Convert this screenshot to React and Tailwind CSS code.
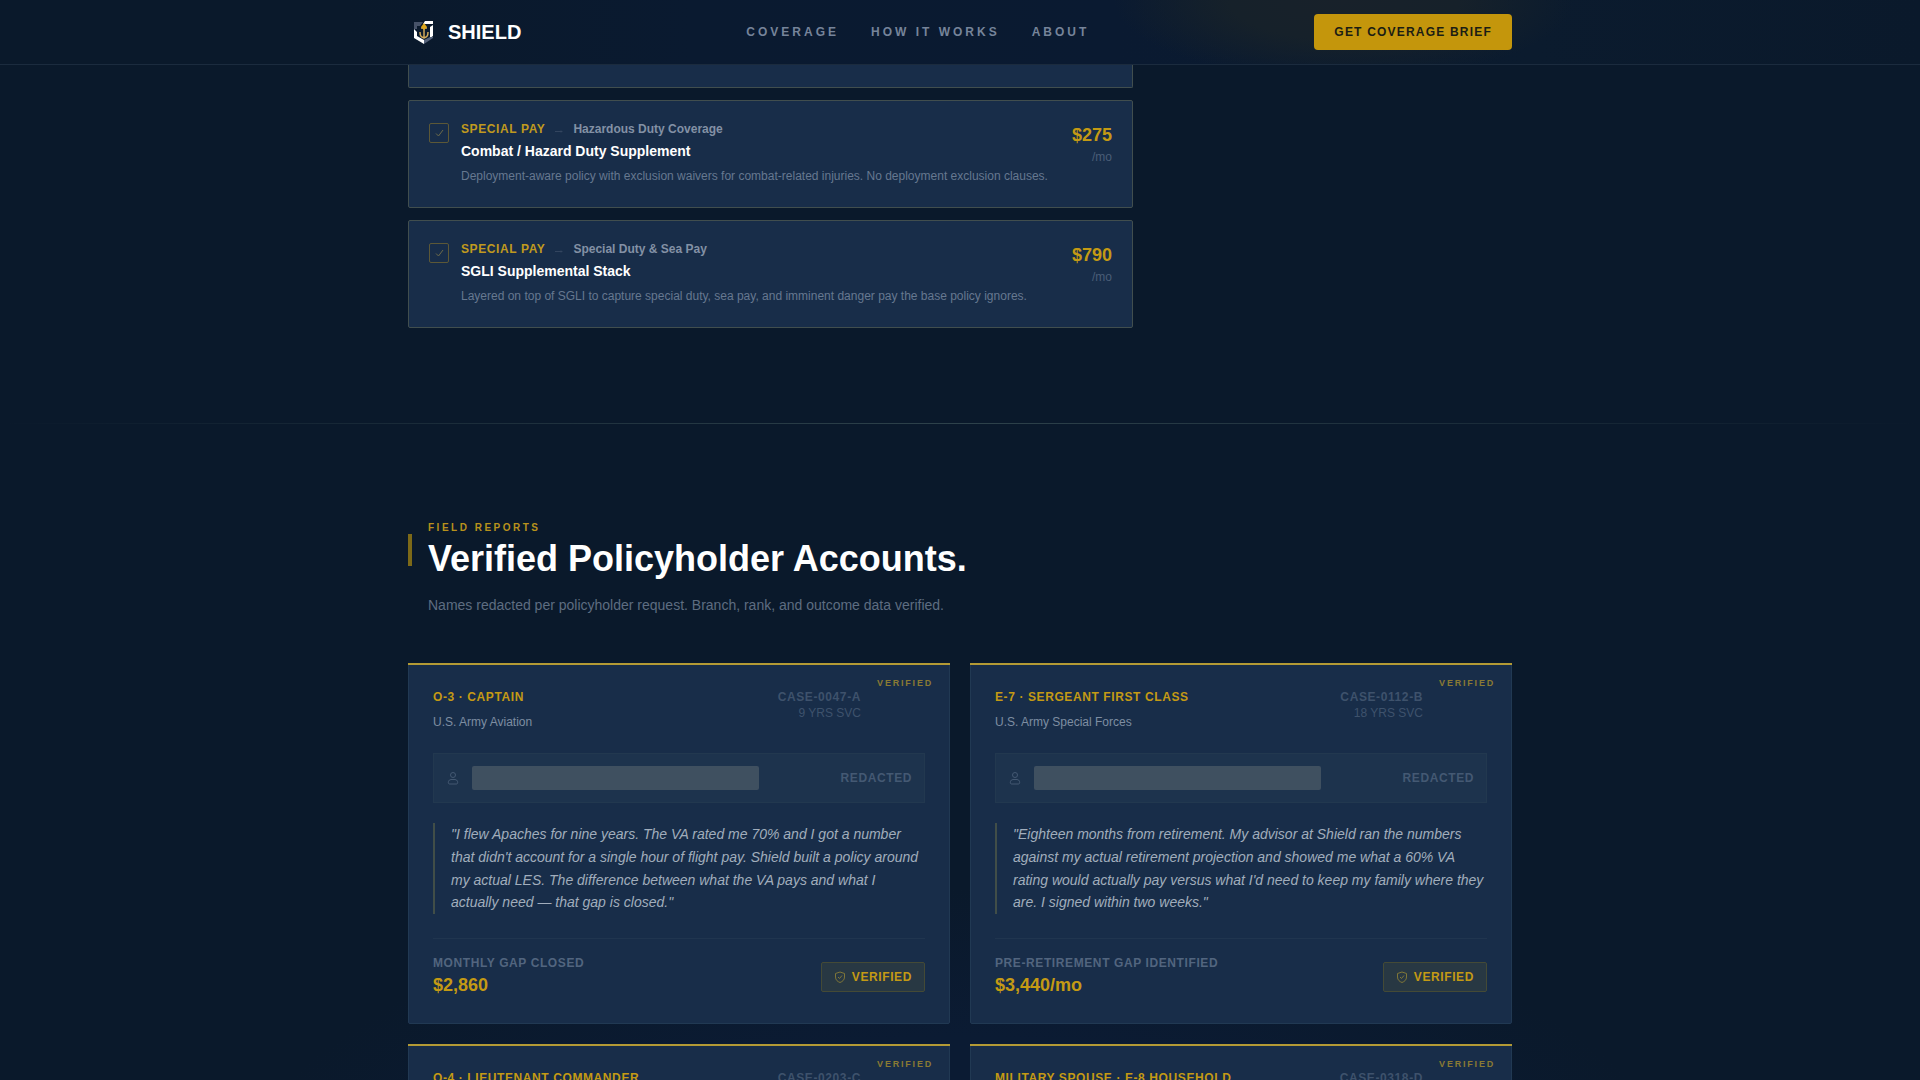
import { useState } from "react"

const plans = [
    {
        id: 'combat', category: 'Hazardous Duty Coverage', title: 'Combat / Hazard Duty Supplement', price: '$275',
        text: 'Deployment-aware policy with exclusion waivers for combat-related injuries. No deployment exclusion clauses.',
    },
    {
        id: 'sgli', category: 'Special Duty & Sea Pay', title: 'SGLI Supplemental Stack', price: '$790',
        text: 'Layered on top of SGLI to capture special duty, sea pay, and imminent danger pay the base policy ignores.',
    },
]

const reports = [
    {
        caseId: 'CASE-0047-A', years: '9 YRS SVC', rank: 'O-3 · CAPTAIN', branch: 'U.S. Army Aviation',
        quote: `"I flew Apaches for nine years. The VA rated me 70% and I got a number that didn't account for a single hour of flight pay. Shield built a policy around my actual LES. The difference between what the VA pays and what I actually need — that gap is closed."`,
        label: 'MONTHLY GAP CLOSED', value: '$2,860',
    },
    {
        caseId: 'CASE-0112-B', years: '18 YRS SVC', rank: 'E-7 · SERGEANT FIRST CLASS', branch: 'U.S. Army Special Forces',
        quote: `"Eighteen months from retirement. My advisor at Shield ran the numbers against my actual retirement projection and showed me what a 60% VA rating would actually pay versus what I'd need to keep my family where they are. I signed within two weeks."`,
        label: 'PRE-RETIREMENT GAP IDENTIFIED', value: '$3,440/mo',
    },
    { caseId: 'CASE-0203-C', rank: 'O-4 · LIEUTENANT COMMANDER' },
    { caseId: 'CASE-0318-D', rank: 'MILITARY SPOUSE · E-8 HOUSEHOLD' },
]

const Logo = () => (
    <svg viewBox="0 0 32 32" className="w-8 h-8" aria-hidden="true">
        <path d="M6 6 H15 L12 10 H9 V13 H6 Z" fill="#465268" />
        <path d="M17 5 H25 V8 H15 Z" fill="#ffffff" />
        <path d="M22 11 L25 9 V20 L22 22 Z" fill="#ffffff" />
        <path d="M6 13 L9 16 V20 L16 24 V28 L6 22 Z" fill="#ffffff" />
        <path d="M25 21 V22 L16 28 V24 L22 21 Z" fill="#55627a" />
        <path d="M16 9 V22 M13 12 H19 M12 16 C12 20 13 21 16 22 C19 21 20 20 20 16" fill="none" stroke="#cfa85a" strokeWidth="1.500" />
        <path d="M16 7 L19 11 L16 14 L13 11 Z" fill="#dca61c" />
    </svg>
)

const Navbar = () => (
    <header className="fixed inset-x-0 top-0 z-10 bg-[#0a192b] bg-[radial-gradient(ellipse_230px_80px_at_70%_0%,#18212a_0%,#16212a_50%,transparent_100%),linear-gradient(90deg,#0a192b_18%,#0a1a30_36%,#0a1a31_58%,#0b1b2e_80%,#0a192b_100%)] border-b border-[#1b2b3e]">
        <div className="max-w-6xl mx-auto px-6 h-16 flex items-center justify-between">
            <a href="#top" className="flex items-center gap-2 text-xl font-bold text-white">
                <Logo />
                SHIELD
            </a>
            <nav className="flex items-center gap-8 text-xs font-bold tracking-[3px] text-[#76849a]">
                <a href="#coverage">COVERAGE</a>
                <a href="#how">HOW IT WORKS</a>
                <a href="#about">ABOUT</a>
            </nav>
            <button type="button" className="h-9 px-5 rounded bg-[#c4960c] text-xs font-bold tracking-widest text-[#1b1d14]">
                GET COVERAGE BRIEF
            </button>
        </div>
    </header>
)

const PlanCard = ({ plan }) => {
    const [checked, setChecked] = useState(true)

    return (
        <div className="flex gap-3 bg-[#182d49] border border-[#414e4e] rounded-xs p-5">
            <div className="relative w-5 h-5 mt-0.5 shrink-0">
                <input type="checkbox" id={plan.id} checked={checked} onChange={(e) => setChecked(e.target.checked)}
                    className="peer block appearance-none w-5 h-5 border border-[#5c5837] rounded-xs" />
                <svg viewBox="0 0 12 12" className="absolute inset-1 w-3 h-3 hidden peer-checked:block pointer-events-none" fill="none" stroke="#6b6a4a">
                    <path d="M3 6.500 L5.500 9 L10 3" />
                </svg>
            </div>
            <div className="flex-1">
                <div className="flex items-center gap-2 text-xs font-bold">
                    <span className="text-[#c09a1e] tracking-[0.05em]">SPECIAL PAY</span>
                    <svg viewBox="0 0 12 12" className="w-3 h-3" fill="none" stroke="#33455f">
                        <path d="M2 8.500 H9 M8 7.500 L9 8.500 L8 9.500" />
                    </svg>
                    <span className="text-[#8391a5]">{plan.category}</span>
                </div>
                <label htmlFor={plan.id} className="block mt-1 text-sm leading-5 font-bold text-white">{plan.title}</label>
                <p className="mt-1 text-xs leading-[22px] text-[#667890]">{plan.text}</p>
            </div>
            <div className="text-right">
                <div className="text-lg font-bold text-[#c49a14]">{plan.price}</div>
                <div className="text-xs text-[#4a5d77]">/mo</div>
            </div>
        </div>
    )
}

const ReportCard = ({ report }) => (
    <article className="relative bg-[#182d49] border border-[#213953] rounded-xs p-6">
        <div className="absolute -inset-x-px -top-px h-0.5 bg-[#b39a35]"></div>
        <span className="absolute top-3 right-4 text-[9px] leading-[14px] font-bold tracking-[0.2em] text-[#8a7a33]">VERIFIED</span>
        <div className="flex items-start justify-between pr-16 mb-5 text-xs">
            <div>
                <h3 className="leading-[18px] font-bold tracking-[0.05em] text-[#c49a14]">{report.rank}</h3>
                <p className="mt-1.5 leading-[21px] text-[#7e8da2]">{report.branch}</p>
            </div>
            <div className="pt-px text-right text-[#3e526c]">
                <div className="font-bold tracking-[0.05em]">{report.caseId}</div>
                <div>{report.years}</div>
            </div>
        </div>
        <div className="flex items-center gap-3 p-3 bg-[#1d334d] border border-[#22384f] text-[#445973]">
            <svg viewBox="0 0 14 14" className="w-3.5 h-3.5 shrink-0" fill="none" stroke="currentColor">
                <circle cx="7" cy="4" r="2.500" />
                <path d="M3.500 13 C1.500 13 2 8.500 5 8.500 H9 C12 8.500 12.500 13 10.500 13 Z" />
            </svg>
            <div className="h-6 w-[287px] bg-[#3f5060] rounded-xs"></div>
            <span className="ml-auto text-xs font-bold tracking-[0.05em]">REDACTED</span>
        </div>
        <blockquote className="mt-5 pl-4 border-l-2 border-[#414e48] text-sm leading-relaxed italic text-[#a1adbc]">
            {report.quote}
        </blockquote>
        <div className="mt-6 pt-4 border-t border-[#20354f] flex items-center justify-between">
            <div>
                <div className="text-xs font-bold tracking-[0.05em] text-[#52657f]">{report.label}</div>
                <div className="text-lg font-bold text-[#c49a14]">{report.value}</div>
            </div>
            <div className="flex items-center gap-1.5 px-3 py-1.5 bg-[#283843] border border-[#444a36] rounded-xs text-xs font-bold tracking-[0.05em] text-[#c49a14]">
                <svg viewBox="0 0 12 12" className="w-3 h-3" fill="none" stroke="#7f7638">
                    <path d="M6 1 L10.500 2.500 V6 C10.500 9 8.500 10.500 6 11.500 C3.500 10.500 1.500 9 1.500 6 V2.500 Z M4 6 L5.500 7.500 L8 4.500" />
                </svg>
                VERIFIED
            </div>
        </div>
    </article>
)

const App = () => {
    return (
        <div id="top" className="h-screen overflow-hidden bg-[#0a192b] bg-[radial-gradient(ellipse_720px_300px_at_50%_110%,#0b1b33_50%,transparent_100%)] font-['Liberation_Sans',Arial,sans-serif]">
            <Navbar />
            <section id="coverage" className="max-w-6xl mx-auto px-6 pt-16 pb-[95px]">
                <div className="max-w-[725px] space-y-3">
                    <div className="h-6 bg-[#182d49] border border-t-0 border-[#414e4e] rounded-b-xs"></div>
                    {plans.map((plan) => <PlanCard key={plan.id} plan={plan} />)}
                </div>
            </section>
            <div className="h-px bg-linear-to-r from-transparent via-[#2e424b] to-transparent"></div>
            <section id="reports" className="max-w-6xl mx-auto px-6 pt-[95px]">
                <div className="flex items-center gap-4">
                    <div className="w-1 h-8 bg-[#7c6918]"></div>
                    <div>
                        <p className="text-[10px] leading-[18px] font-bold tracking-[0.25em] text-[#b8921c]">FIELD REPORTS</p>
                        <h2 className="text-4xl leading-[43px] font-bold text-white">Verified Policyholder Accounts.</h2>
                    </div>
                </div>
                <p className="mt-3.5 pl-5 text-sm leading-[22px] text-[#5e6d81]">
                    Names redacted per policyholder request. Branch, rank, and outcome data verified.
                </p>
                <div className="mt-[47px] grid grid-cols-2 gap-5">
                    {reports.map((report) => <ReportCard key={report.caseId} report={report} />)}
                </div>
            </section>
        </div>
    )
}

export default App
